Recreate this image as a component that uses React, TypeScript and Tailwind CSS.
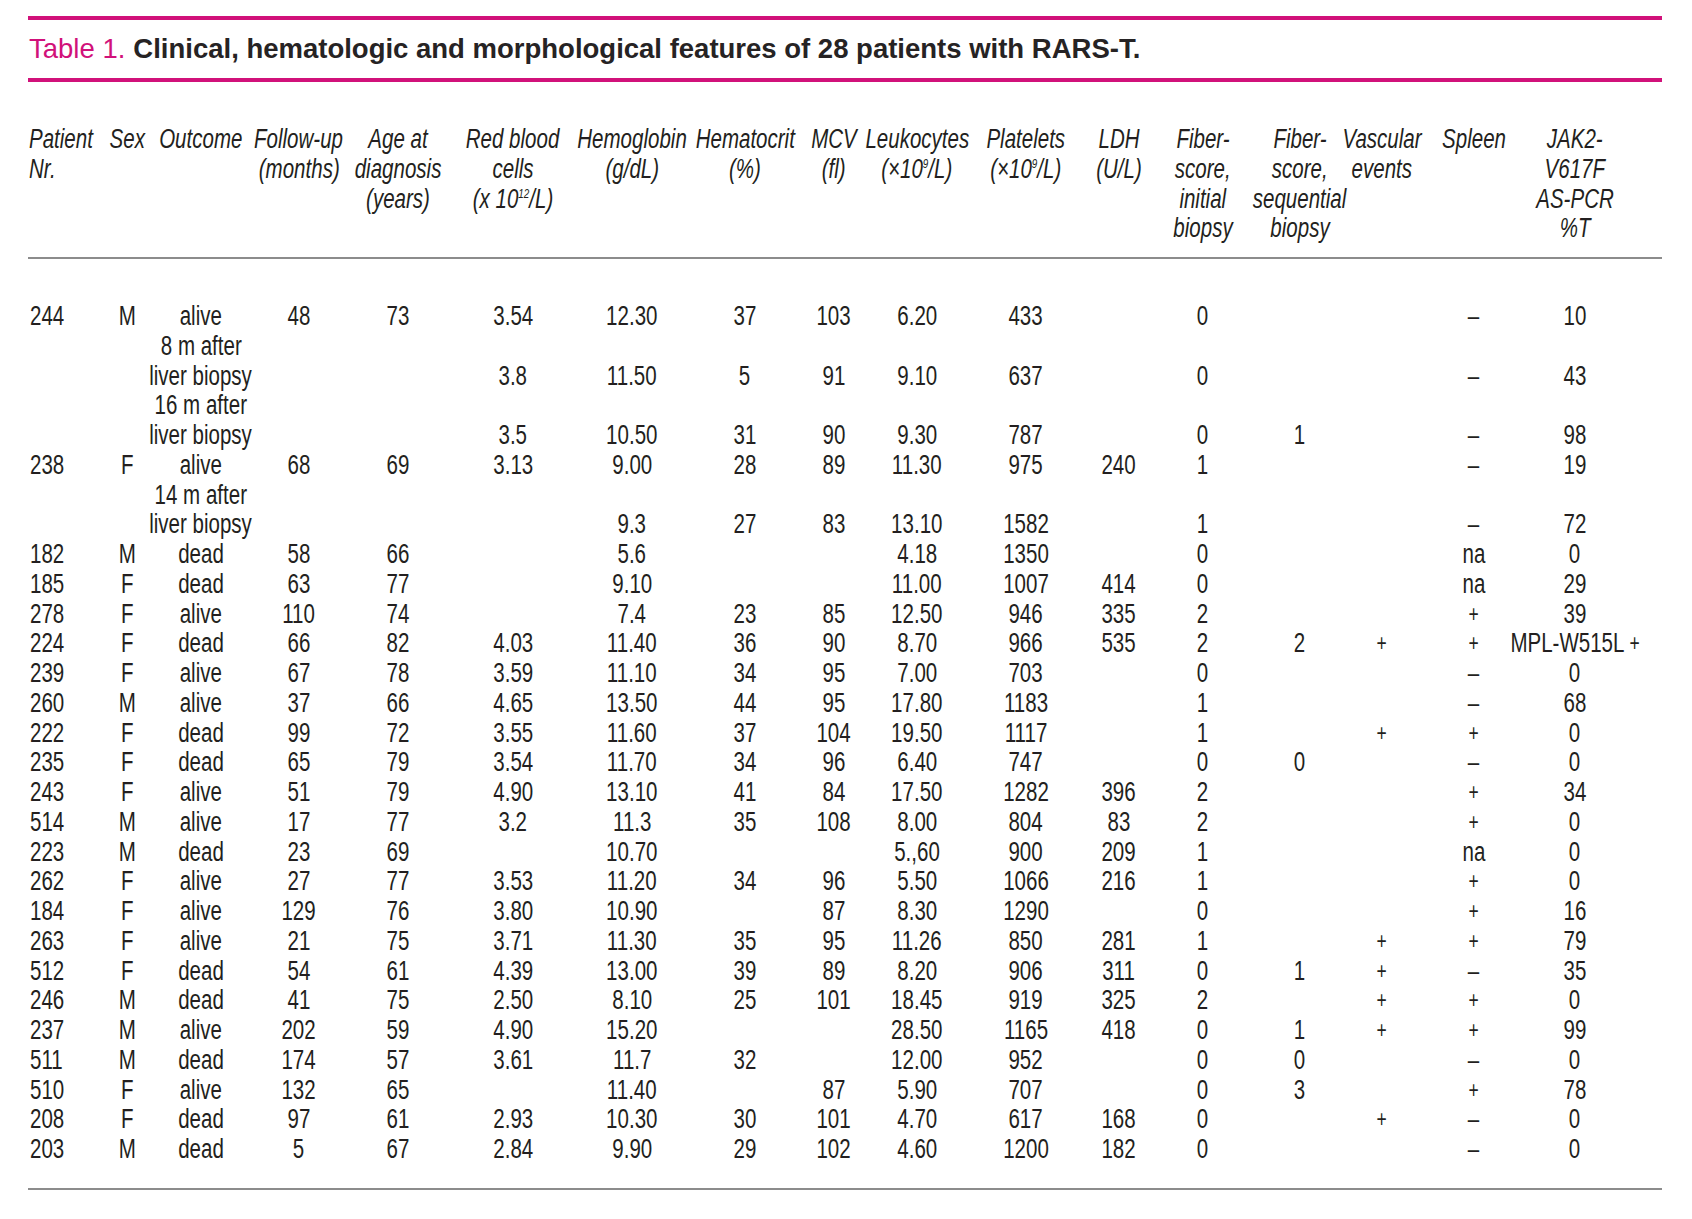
import React from "react";

const COLS =
  "grid grid-cols-[74px_50px_98px_98px_100px_130px_108px_118px_60px_106px_112px_74px_94px_100px_64px_120px_82px]";

type Cell = React.ReactNode;

const Sup = ({ children }: { children: React.ReactNode }) => (
  <span className="relative -top-[10px] text-[13px] leading-none">{children}</span>
);

const header: Cell[][] = [
  ["Patient", "Nr."],
  ["Sex"],
  ["Outcome"],
  ["Follow-up", "(months)"],
  ["Age at", "diagnosis", "(years)"],
  [
    "Red blood",
    "cells",
    <span key="r">
      (x 10<Sup>12</Sup>/L)
    </span>,
  ],
  ["Hemoglobin", "(g/dL)"],
  ["Hematocrit", "(%)"],
  ["MCV", "(fl)"],
  [
    "Leukocytes",
    <span key="l">
      (×10<Sup>9</Sup>/L)
    </span>,
  ],
  [
    "Platelets",
    <span key="p">
      (×10<Sup>9</Sup>/L)
    </span>,
  ],
  ["LDH", "(U/L)"],
  ["Fiber-", "score,", "initial", "biopsy"],
  ["Fiber-", "score,", "sequential", "biopsy"],
  ["Vascular", "events"],
  ["Spleen"],
  ["JAK2-", "V617F", "AS-PCR", "%T"],
];

type Row = (string | string[])[];
const rows: Row[] = [
  ["244", "M", "alive", "48", "73", "3.54", "12.30", "37", "103", "6.20", "433", "", "0", "", "", "–", "10"],
  ["", "", ["8 m after", "liver biopsy"], "", "", "3.8", "11.50", "5", "91", "9.10", "637", "", "0", "", "", "–", "43"],
  ["", "", ["16 m after", "liver biopsy"], "", "", "3.5", "10.50", "31", "90", "9.30", "787", "", "0", "1", "", "–", "98"],
  ["238", "F", "alive", "68", "69", "3.13", "9.00", "28", "89", "11.30", "975", "240", "1", "", "", "–", "19"],
  ["", "", ["14 m after", "liver biopsy"], "", "", "", "9.3", "27", "83", "13.10", "1582", "", "1", "", "", "–", "72"],
  ["182", "M", "dead", "58", "66", "", "5.6", "", "", "4.18", "1350", "", "0", "", "", "na", "0"],
  ["185", "F", "dead", "63", "77", "", "9.10", "", "", "11.00", "1007", "414", "0", "", "", "na", "29"],
  ["278", "F", "alive", "110", "74", "", "7.4", "23", "85", "12.50", "946", "335", "2", "", "", "+", "39"],
  ["224", "F", "dead", "66", "82", "4.03", "11.40", "36", "90", "8.70", "966", "535", "2", "2", "+", "+", "MPL-W515L +"],
  ["239", "F", "alive", "67", "78", "3.59", "11.10", "34", "95", "7.00", "703", "", "0", "", "", "–", "0"],
  ["260", "M", "alive", "37", "66", "4.65", "13.50", "44", "95", "17.80", "1183", "", "1", "", "", "–", "68"],
  ["222", "F", "dead", "99", "72", "3.55", "11.60", "37", "104", "19.50", "1117", "", "1", "", "+", "+", "0"],
  ["235", "F", "dead", "65", "79", "3.54", "11.70", "34", "96", "6.40", "747", "", "0", "0", "", "–", "0"],
  ["243", "F", "alive", "51", "79", "4.90", "13.10", "41", "84", "17.50", "1282", "396", "2", "", "", "+", "34"],
  ["514", "M", "alive", "17", "77", "3.2", "11.3", "35", "108", "8.00", "804", "83", "2", "", "", "+", "0"],
  ["223", "M", "dead", "23", "69", "", "10.70", "", "", "5.,60", "900", "209", "1", "", "", "na", "0"],
  ["262", "F", "alive", "27", "77", "3.53", "11.20", "34", "96", "5.50", "1066", "216", "1", "", "", "+", "0"],
  ["184", "F", "alive", "129", "76", "3.80", "10.90", "", "87", "8.30", "1290", "", "0", "", "", "+", "16"],
  ["263", "F", "alive", "21", "75", "3.71", "11.30", "35", "95", "11.26", "850", "281", "1", "", "+", "+", "79"],
  ["512", "F", "dead", "54", "61", "4.39", "13.00", "39", "89", "8.20", "906", "311", "0", "1", "+", "–", "35"],
  ["246", "M", "dead", "41", "75", "2.50", "8.10", "25", "101", "18.45", "919", "325", "2", "", "+", "+", "0"],
  ["237", "M", "alive", "202", "59", "4.90", "15.20", "", "", "28.50", "1165", "418", "0", "1", "+", "+", "99"],
  ["511", "M", "dead", "174", "57", "3.61", "11.7", "32", "", "12.00", "952", "", "0", "0", "", "–", "0"],
  ["510", "F", "alive", "132", "65", "", "11.40", "", "87", "5.90", "707", "", "0", "3", "", "+", "78"],
  ["208", "F", "dead", "97", "61", "2.93", "10.30", "30", "101", "4.70", "617", "168", "0", "", "+", "–", "0"],
  ["203", "M", "dead", "5", "67", "2.84", "9.90", "29", "102", "4.60", "1200", "182", "0", "", "", "–", "0"],
];

function renderValue(v: string) {
  if (v === "+") {
    return <span className="relative -top-[1px] text-[23px]">{v}</span>;
  }
  if (v === "MPL-W515L +") {
    return (
      <span>
        MPL-W515L <span className="relative -top-[1px] text-[23px]">+</span>
      </span>
    );
  }
  return v;
}

// Condensed text: the reference uses a condensed face; narrow the installed face horizontally.
const Narrow = ({ children, left }: { children: React.ReactNode; left?: boolean }) => (
  <span className={`inline-block scale-x-[0.76] ${left ? "origin-left" : "origin-center"}`}>
    {children}
  </span>
);

export default function App() {
  return (
    <div className="w-[1692px] h-[1219px] bg-white pl-[28px] pt-[16px] text-[#231f20]">
      <div className="w-[1634px]">
        <div className="h-[4px] bg-[#d1117a]" />
        <div className="h-[58px] flex items-center pl-[1px] font-['Liberation_Sans',Arial,sans-serif] text-[27.5px] leading-none">
          <span className="text-[#d1117a]">Table 1.</span>
          <span className="ml-[8px] font-bold text-[#262324]">
            Clinical, hematologic and morphological features of 28 patients with RARS-T.
          </span>
        </div>
        <div className="h-[4px] bg-[#d1117a]" />

        <div className="font-['Liberation_Sans',Arial,sans-serif] text-[27px] leading-[29.75px]">
          {/* Header */}
          <div className={`${COLS} mt-[43px] italic`}>
            {header.map((lines, i) => (
              <div
                key={i}
                className={`flex flex-col whitespace-nowrap ${i === 0 ? "items-start pl-[1px]" : "items-center"}`}
              >
                {lines.map((l, j) => (
                  <div key={j} className="h-[29.75px]">
                    <Narrow left={i === 0}>{l}</Narrow>
                  </div>
                ))}
              </div>
            ))}
          </div>

          <div className="mt-[13px] h-[2px] bg-[#8c8c8c]" />

          {/* Body */}
          <div className="mt-[43px]">
            {rows.map((r, ri) => (
              <div key={ri} className={`${COLS} items-end`}>
                {r.map((v, ci) => (
                  <div
                    key={ci}
                    className={`flex flex-col whitespace-nowrap ${ci === 0 ? "items-start pl-[2px]" : "items-center"}`}
                  >
                    {Array.isArray(v)
                      ? v.map((l, j) => (
                          <div key={j} className="h-[29.75px]">
                            <Narrow>{l}</Narrow>
                          </div>
                        ))
                      : (
                          <div className="h-[29.75px]">
                            {v !== "" && <Narrow left={ci === 0}>{renderValue(v)}</Narrow>}
                          </div>
                        )}
                  </div>
                ))}
              </div>
            ))}
          </div>

          <div className="mt-[23px] h-[2px] bg-[#8c8c8c]" />
        </div>
      </div>
    </div>
  );
}
